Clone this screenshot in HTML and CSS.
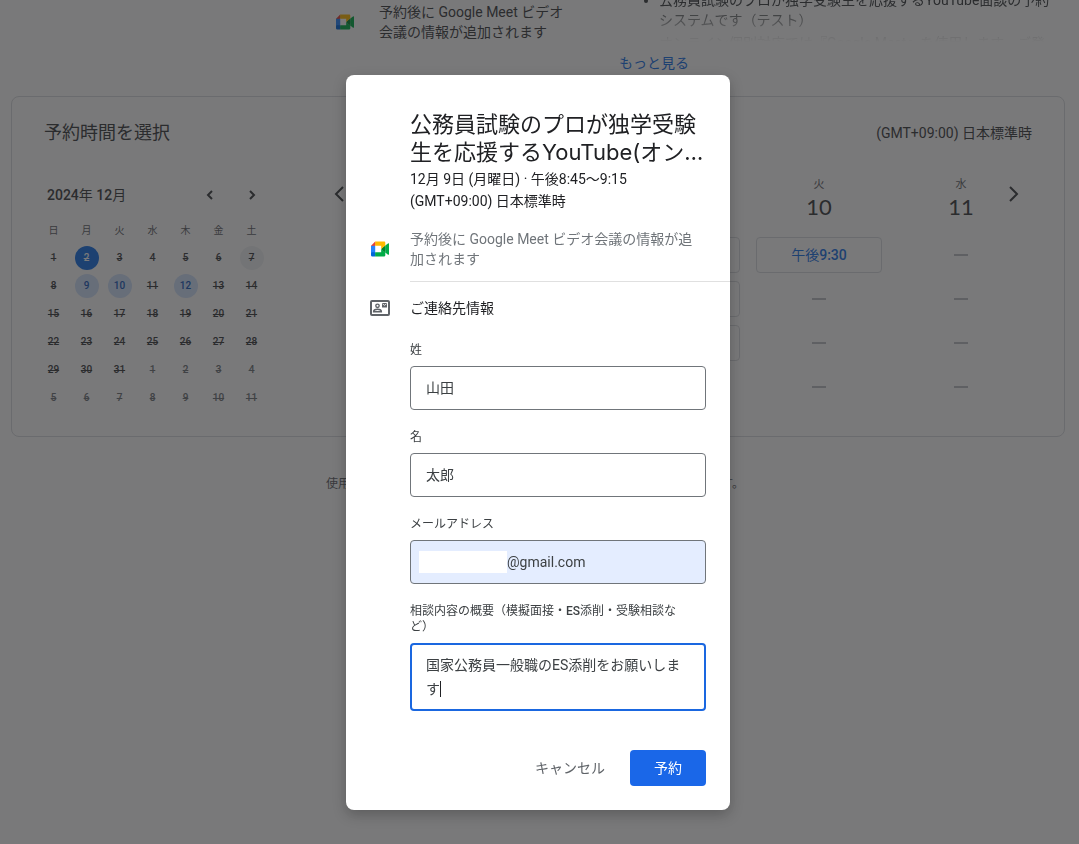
FILE: index.html
```html
<!DOCTYPE html>
<html lang="ja">
<head>
  <meta charset="UTF-8">
  <meta name="viewport" content="width=device-width, initial-scale=1.0">
  <title>予約時間を選択</title>
  <link rel="stylesheet" href="styles.css">
</head>
<body>

  <!-- Shared icons -->
  <svg class="sprite" aria-hidden="true">
    <symbol id="meet" viewBox="0 0 87.5 72">
      <path fill="#00832d" d="M49.5 36l8.53 9.75 11.47 7.33 2-17.02-2-16.64-11.69 6.44z"/>
      <path fill="#0066da" d="M0 51.5V66c0 3.315 2.685 6 6 6h14.5l3-10.96-3-9.54-9.95-3z"/>
      <path fill="#e94235" d="M20.5 0L0 20.5l10.55 3 9.95-3 2.95-9.41z"/>
      <path fill="#2684fc" d="M20.5 20.5H0v31h20.5z"/>
      <path fill="#00ac47" d="M82.6 8.68L69.5 19.42v33.66l13.16 10.79c1.97 1.54 4.85.135 4.85-2.37V11c0-2.535-2.945-3.925-4.91-2.32zM49.5 36v15.5h-29V72h43c3.315 0 6-2.685 6-6V53.08z"/>
      <path fill="#ffba00" d="M63.5 0h-43v20.5h29V36l20-16.57V6c0-3.315-2.685-6-6-6z"/>
    </symbol>
  </svg>

  <main class="page">
    <header class="intro">
      <div class="intro-meet">
        <svg class="meet-icon" aria-hidden="true"><use href="#meet"/></svg>
        <p>予約後に Google Meet ビデオ<br>会議の情報が追加されます</p>
      </div>
      <div class="intro-about">
        <div class="about-clip">
          <ul>
            <li>公務員試験のプロが独学受験生を応援するYouTube面談の予約<br>システムです（テスト）
              <p>オンライン個別対応では『Google Meet』を使用します。ご登</p>
            </li>
          </ul>
        </div>
        <a class="more" href="#">もっと見る</a>
      </div>
    </header>

    <section class="booking">
      <div class="booking-head">
        <h2>予約時間を選択</h2>
        <span class="timezone">(GMT+09:00) 日本標準時</span>
      </div>

      <div class="booking-body">
        <!-- Month calendar -->
        <div class="month">
          <div class="month-head">
            <h3><b>2024</b>年 <b>12</b>月</h3>
            <button type="button" aria-label="前の月"><svg width="8" height="12" viewBox="0 0 8 12"><path d="M6 2L2 6l4 4"/></svg></button>
            <button type="button" aria-label="次の月"><svg width="8" height="12" viewBox="0 0 8 12"><path d="M2 2l4 4-4 4"/></svg></button>
          </div>
          <table>
            <thead>
              <tr><th>日</th><th>月</th><th>火</th><th>水</th><th>木</th><th>金</th><th>土</th></tr>
            </thead>
            <tbody>
              <tr><td><span>1</span></td><td><span class="today">2</span></td><td><span>3</span></td><td><span>4</span></td><td><span>5</span></td><td><span>6</span></td><td><span class="picked">7</span></td></tr>
              <tr><td><span>8</span></td><td><button type="button">9</button></td><td><button type="button">10</button></td><td><span>11</span></td><td><button type="button">12</button></td><td><span>13</span></td><td><span>14</span></td></tr>
              <tr><td><span>15</span></td><td><span>16</span></td><td><span>17</span></td><td><span>18</span></td><td><span>19</span></td><td><span>20</span></td><td><span>21</span></td></tr>
              <tr><td><span>22</span></td><td><span>23</span></td><td><span>24</span></td><td><span>25</span></td><td><span>26</span></td><td><span>27</span></td><td><span>28</span></td></tr>
              <tr><td><span>29</span></td><td><span>30</span></td><td><span>31</span></td><td><span class="out">1</span></td><td><span class="out">2</span></td><td><span class="out">3</span></td><td><span class="out">4</span></td></tr>
              <tr><td><span class="out">5</span></td><td><span class="out">6</span></td><td><span class="out">7</span></td><td><span class="out">8</span></td><td><span class="out">9</span></td><td><span class="out">10</span></td><td><span class="out">11</span></td></tr>
            </tbody>
          </table>
        </div>

        <!-- Open slots by day -->
        <div class="week">
          <button type="button" class="nav nav-prev" aria-label="前へ"><svg width="12" height="18" viewBox="0 0 12 18"><path d="M9 2L2 9l7 7"/></svg></button>
          <div class="day day-1"><span>土</span><strong>7</strong><i></i><i></i><i></i><i></i></div>
          <div class="day day-2"><span>日</span><strong>8</strong><i></i><i></i><i></i><i></i></div>
          <div class="day day-3"><span>月</span><strong>9</strong>
            <button type="button">午後<b>8:45</b></button>
            <button type="button">午後<b>9:15</b></button>
            <button type="button">午後<b>9:45</b></button>
            <i></i>
          </div>
          <div class="day day-4"><span>火</span><strong>10</strong>
            <button type="button">午後<b>9:30</b></button>
            <i></i><i></i><i></i>
          </div>
          <div class="day day-5"><span>水</span><strong>11</strong><i></i><i></i><i></i><i></i></div>
          <button type="button" class="nav nav-next" aria-label="次へ"><svg width="12" height="18" viewBox="0 0 12 18"><path d="M2 2l7 7-7 7"/></svg></button>
        </div>
      </div>
    </section>

    <p class="help">使用上の問題については、予約ページの作成者にお問い合わせいただけます。</p>
  </main>

  <!-- Booking dialog -->
  <div class="overlay">
    <form class="dialog" role="dialog" aria-modal="true" aria-labelledby="dialog-title">
      <h1 id="dialog-title">公務員試験のプロが独学受験生を応援するYouTube(オン…</h1>
      <p class="when">12月 9日 (月曜日) · 午後8:45〜9:15<br>(GMT+09:00) 日本標準時</p>

      <div class="row row-meet">
        <svg class="meet-icon" aria-hidden="true"><use href="#meet"/></svg>
        <p>予約後に Google Meet ビデオ会議の情報が追<br>加されます</p>
      </div>

      <div class="row row-contact">
        <svg class="contact-icon" width="20" height="16" viewBox="0 0 20 16" aria-hidden="true">
          <rect x="1" y="1" width="18" height="14" rx="1" fill="none" stroke="#5f6368" stroke-width="2"/>
          <circle cx="7.5" cy="5.8" r="1.7" fill="none" stroke="#5f6368" stroke-width="1.4"/>
          <path d="M3.7 11.8c0-1.500 1.800-2.500 3.800-2.500s3.800 1 3.800 2.500z" fill="none" stroke="#5f6368" stroke-width="1.6"/>
          <path fill="#5f6368" d="M12 3h5v4.500h-5z"/>
          <path d="M12.500 3.800l2 1.500 2-1.500" fill="none" stroke="#fff" stroke-width=".8"/>
        </svg>
        <h2>ご連絡先情報</h2>
      </div>

      <div class="form-group">
        <label for="last-name">姓</label>
        <input type="text" id="last-name" name="last-name" value="山田">
      </div>

      <div class="form-group">
        <label for="first-name">名</label>
        <input type="text" id="first-name" name="first-name" value="太郎">
      </div>

      <div class="form-group">
        <label for="email">メールアドレス</label>
        <div class="email-box">
          <span class="email-mask"></span>
          <input type="text" id="email" name="email" value="@gmail.com">
        </div>
      </div>

      <div class="form-group">
        <label for="topic">相談内容の概要（模擬面接・<b>ES</b>添削・受験相談な<br>ど）</label>
        <div class="topic-box">
          <textarea id="topic" name="topic" rows="2">国家公務員一般職のES添削をお願いします</textarea>
          <span class="caret"></span>
        </div>
      </div>

      <div class="actions">
        <button type="button" class="cancel">キャンセル</button>
        <button type="submit" class="submit">予約</button>
      </div>
    </form>
  </div>

</body>
</html>
```

FILE: styles.css
```css
* {
  box-sizing: border-box;
}

body {
  margin: 0;
  background: #fff;
  color: #3c4043;
  font-family: Roboto, "Noto Sans CJK JP", sans-serif;
  font-size: 14px;
  line-height: 20px;
  min-height: 100vh;
  overflow: hidden;
}

h1, h2, h3, p, ul {
  margin: 0;
  font-weight: 400;
}

b {
  font-weight: 500;
}

button, input, textarea {
  font: inherit;
  color: inherit;
}

button {
  padding: 0;
  border: none;
  background: none;
  cursor: pointer;
}

.sprite {
  display: none;
}

.meet-icon {
  width: 18px;
  height: 16px;
  flex: none;
}

/* Page */
.page {
  padding: 0 14px 0 11px;
}

.intro {
  display: grid;
  grid-template-columns: 608px 1fr;
}

.intro-meet {
  display: flex;
  align-items: center;
  gap: 25px;
  height: 40px;
  margin-top: 2px;
  padding-left: 325px;
}

.about-clip {
  height: 42px;
  overflow: hidden;
  -webkit-mask-image: linear-gradient(#000 4px, transparent 42px);
  mask-image: linear-gradient(#000 4px, transparent 42px);
}

.about-clip ul {
  margin-top: -10px;
  padding-left: 40px;
}

.about-clip p {
  margin-top: 3px;
}

.more {
  display: inline-block;
  margin-top: 11px;
  color: #1a73e8;
  text-decoration: none;
}

.booking {
  margin-top: 23px;
  padding: 24px 32px 23px 25px;
  border: 1px solid #dadce0;
  border-radius: 8px;
}

.booking-head {
  display: flex;
  justify-content: space-between;
  align-items: center;
  height: 24px;
  padding-left: 7px;
}

.booking-head h2 {
  font-size: 18px;
}

.booking-body {
  display: flex;
  gap: 54px;
  margin-top: 30px;
}

/* Month calendar */
.month {
  flex: none;
  width: 231px;
}

.month-head {
  display: flex;
  align-items: center;
  height: 40px;
  margin-right: -5px;
  padding-left: 10px;
}

.month-head h3 {
  flex: 1;
  font-size: 14px;
}

.month-head button {
  width: 42px;
  height: 28px;
}

.month-head button svg {
  display: block;
  margin: auto;
}

.month path,
.nav path {
  fill: none;
  stroke: #3c4043;
  stroke-width: 2;
}

.month table {
  width: 100%;
  border-collapse: collapse;
  table-layout: fixed;
  font-size: 10px;
  line-height: 24px;
  text-align: center;
}

.month th {
  padding: 4px 0 1px;
  font-weight: 400;
  color: #5f6368;
}

.month td {
  padding: 2px 0;
  font-weight: 500;
}

.month td span,
.month td button {
  display: block;
  width: 24px;
  height: 24px;
  margin: 0 auto;
  border-radius: 50%;
}

.month td span {
  text-decoration: line-through;
}

.month td button {
  background: #d2e3fc;
  color: #185abc;
}

.month td .today {
  background: #1a73e8;
  color: #fff;
}

.month td .picked {
  background: #f1f3f4;
}

.month td .out {
  color: #70757a;
}

/* Week view */
.week {
  flex: 1;
  display: grid;
  grid-template-columns: repeat(5, 1fr);
  align-items: start;
}

.day {
  grid-row: 1;
  display: flex;
  flex-direction: column;
  align-items: center;
  padding-top: 2px;
}

.day-1 { grid-column: 1; }
.day-2 { grid-column: 2; }
.day-3 { grid-column: 3; }
.day-4 { grid-column: 4; }
.day-5 { grid-column: 5; }

.day > span {
  font-size: 11px;
  line-height: 16px;
  color: #5f6368;
}

.day strong {
  margin-bottom: 16px;
  font-family: Lato, "Noto Sans CJK JP", sans-serif;
  font-size: 22px;
  line-height: 28px;
  font-weight: 400;
}

.day > button {
  width: 126px;
  height: 36px;
  margin-bottom: 8px;
  border: 1px solid #dadce0;
  border-radius: 4px;
  color: #1a73e8;
}

.day i {
  width: 14px;
  height: 2px;
  margin: 17px 0 25px;
  background: #bdc1c6;
}

.nav {
  grid-row: 1;
  z-index: 1;
  width: 36px;
  height: 38px;
}

.nav svg {
  display: block;
  margin: auto;
}

.nav-prev {
  grid-column: 1;
  justify-self: start;
}

.nav-next {
  grid-column: 5;
  justify-self: end;
}

.help {
  margin-top: 37px;
  padding-right: 6px;
  font-size: 12px;
  line-height: 20px;
  text-align: center;
  color: #5f6368;
}

/* Dialog */
.overlay {
  position: fixed;
  inset: 0;
  z-index: 2;
  display: flex;
  justify-content: center;
  align-items: flex-start;
  padding: 75px 3px 0 0;
  background: rgba(32, 31, 34, 0.6);
}

.dialog {
  width: 384px;
  padding: 35px 24px 24px 64px;
  border-radius: 8px;
  background: #fff;
  box-shadow: 0 5px 14px rgba(0, 0, 0, 0.24);
}

.dialog h1 {
  color: #202124;
  font-family: Inter, "Noto Sans CJK JP", sans-serif;
  font-size: 22px;
  line-height: 28px;
}

.when {
  margin-top: 2px;
  line-height: 22px;
  color: #202124;
}

.row {
  display: flex;
  align-items: center;
  margin-left: -40px;
}

.row-meet {
  gap: 21px;
  margin-top: 17px;
  padding-left: 1px;
  color: #70757a;
}

.row-contact {
  position: relative;
  gap: 20px;
  margin-top: 12px;
  padding-top: 17px;
}

.row-contact::before {
  content: "";
  position: absolute;
  top: 0;
  left: 40px;
  right: -24px;
  border-top: 1px solid #e0e0e0;
}

.row-contact h2 {
  font-size: 14px;
  color: #202124;
}

.form-group {
  margin-top: 19px;
}

.row-contact + .form-group {
  margin-top: 24px;
}

.form-group label {
  display: block;
  margin-bottom: 8px;
  font-size: 12px;
  line-height: 16px;
}

.form-group input {
  display: block;
  width: 100%;
  height: 44px;
  padding: 0 15px 2px;
  border: 1px solid #70757a;
  border-radius: 4px;
  background: #fff;
  outline: none;
}

.form-group .email-box {
  display: flex;
  align-items: center;
  padding: 0 8px;
  border: 1px solid #70757a;
  border-radius: 4px;
  background: #e4edff;
}

.email-mask {
  flex: none;
  width: 88px;
  height: 22px;
  background: #fff;
}

.form-group .email-box input {
  height: 42px;
  padding: 0;
  border: none;
  background: none;
}

.topic-box {
  position: relative;
}

.topic-box textarea {
  display: block;
  width: 100%;
  height: 68px;
  padding: 8px 14px;
  border: 2px solid #1a67e0;
  border-radius: 4px;
  line-height: 24px;
  outline: none;
  resize: none;
  overflow: hidden;
}

.caret {
  position: absolute;
  left: 30px;
  bottom: 14px;
  width: 1px;
  height: 16px;
  background: #202124;
}

.actions {
  display: flex;
  justify-content: flex-end;
  gap: 8px;
  margin-top: 39px;
}

.actions button {
  height: 36px;
  border-radius: 4px;
}

.cancel {
  padding: 0 17px;
  color: #5f6368;
}

.actions .submit {
  width: 76px;
  background: #1a67e8;
  color: #fff;
}
```
